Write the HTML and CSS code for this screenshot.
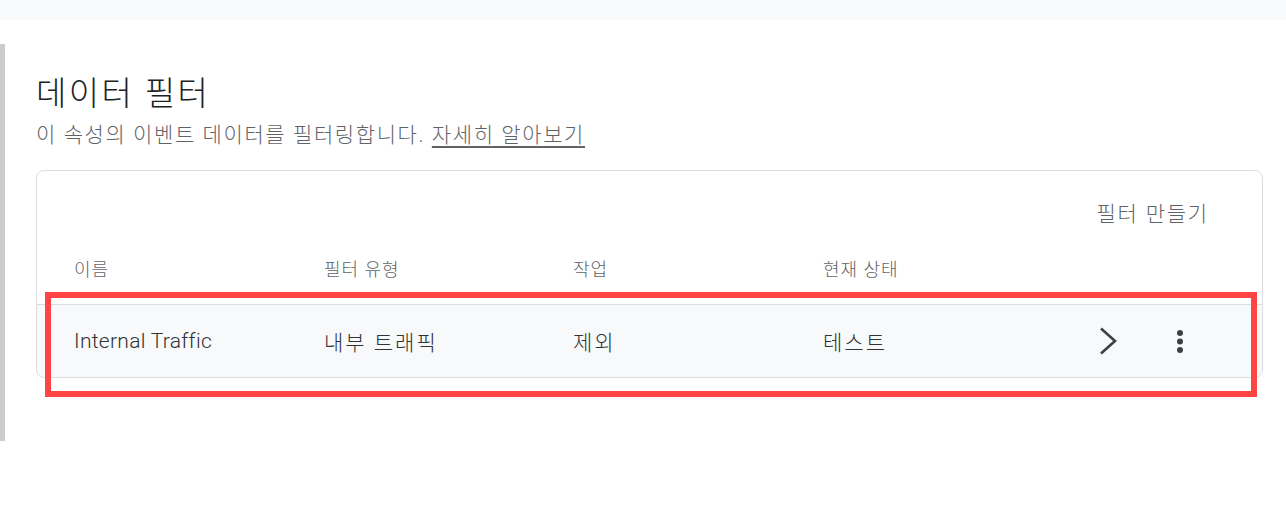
FILE: index.html
```html
<!DOCTYPE html>
<html lang="ko">
<head>
  <meta charset="UTF-8">
  <title>데이터 필터</title>
  <link rel="stylesheet" href="styles.css">
</head>
<body>
  <div class="topbar"></div>

  <div class="main">
    <h1 class="title">데이터 필터</h1>
    <p class="subtitle">이 속성의 이벤트 데이터를 필터링합니다. <a href="#">자세히 알아보기</a></p>

    <div class="card">
      <div class="toolbar">
        <span class="create">필터 만들기</span>
      </div>

      <div class="table-head">
        <span>이름</span>
        <span>필터 유형</span>
        <span>작업</span>
        <span>현재 상태</span>
      </div>

      <div class="table-row">
        <span class="latin">Internal Traffic</span>
        <span>내부 트래픽</span>
        <span>제외</span>
        <span>테스트</span>
        <div class="actions">
          <span class="icon">
            <svg width="48" height="48" viewBox="0 0 48 48">
              <polyline points="17,11.5 31,24 17,36.5" fill="none" stroke="#3c4043" stroke-width="2.6"/>
            </svg>
          </span>
          <span class="icon">
            <svg width="48" height="48" viewBox="0 0 48 48">
              <circle cx="24" cy="16" r="3" fill="#3c4043"/>
              <circle cx="24" cy="24.5" r="3" fill="#3c4043"/>
              <circle cx="24" cy="33" r="3" fill="#3c4043"/>
            </svg>
          </span>
        </div>
        <!-- 강조 표시 -->
        <div class="highlight"></div>
      </div>
    </div>
  </div>
</body>
</html>
```

FILE: styles.css
```css
body {
  margin: 0;
  font-family: Roboto, "Noto Sans CJK KR", sans-serif;
  background: #fff;
  color: #3c4043;
}
.topbar {
  height: 20px;
  background: #f8f9fa;
}
.main {
  margin-top: 24px;
  height: 367px;
  border-left: 5px solid #cccccc;
  padding: 30px 23px 0 31px;
}
.title {
  margin: 0;
  font-size: 33px;
  line-height: 40px;
  font-weight: 300;
  letter-spacing: 2.4px;
  color: #202124;
}
.subtitle {
  margin: 7px 0 0;
  font-size: 21px;
  line-height: 28px;
  font-weight: 300;
  letter-spacing: 1.6px;
  color: #5f6368;
}
.subtitle a {
  color: #5f6368;
  text-decoration: underline;
  text-underline-offset: 4px;
}
.card {
  margin-top: 21px;
  border: 1px solid #dadce0;
  border-radius: 8px;
}
.toolbar {
  display: flex;
  justify-content: flex-end;
  padding: 31px 53px 0;
}
.create {
  font-size: 21px;
  line-height: 24px;
  font-weight: 300;
  letter-spacing: 1.8px;
  color: #5f6368;
}
.table-head,
.table-row {
  display: grid;
  grid-template-columns: 250px 249px 250px 1fr auto;
  align-items: center;
  padding: 0 58px 0 37px;
}
.table-head {
  padding-top: 32px;
  padding-bottom: 22px;
  font-size: 18px;
  line-height: 24px;
  font-weight: 300;
  letter-spacing: 1px;
  color: #5f6368;
}
.table-row {
  position: relative;
  height: 72px;
  border-top: 1px solid #dadce0;
  background: #f8f9fa;
  border-radius: 0 0 8px 8px;
  font-size: 21px;
  font-weight: 300;
  letter-spacing: 2px;
  color: #303336;
}
.table-row .latin {
  letter-spacing: 0.3px;
}
.actions {
  display: flex;
  gap: 24px;
}
.icon {
  display: flex;
  width: 48px;
  height: 48px;
}
.highlight {
  position: absolute;
  left: 8px;
  right: 5px;
  top: -13px;
  bottom: -20px;
  border: 6px solid #ff4444;
}
```
